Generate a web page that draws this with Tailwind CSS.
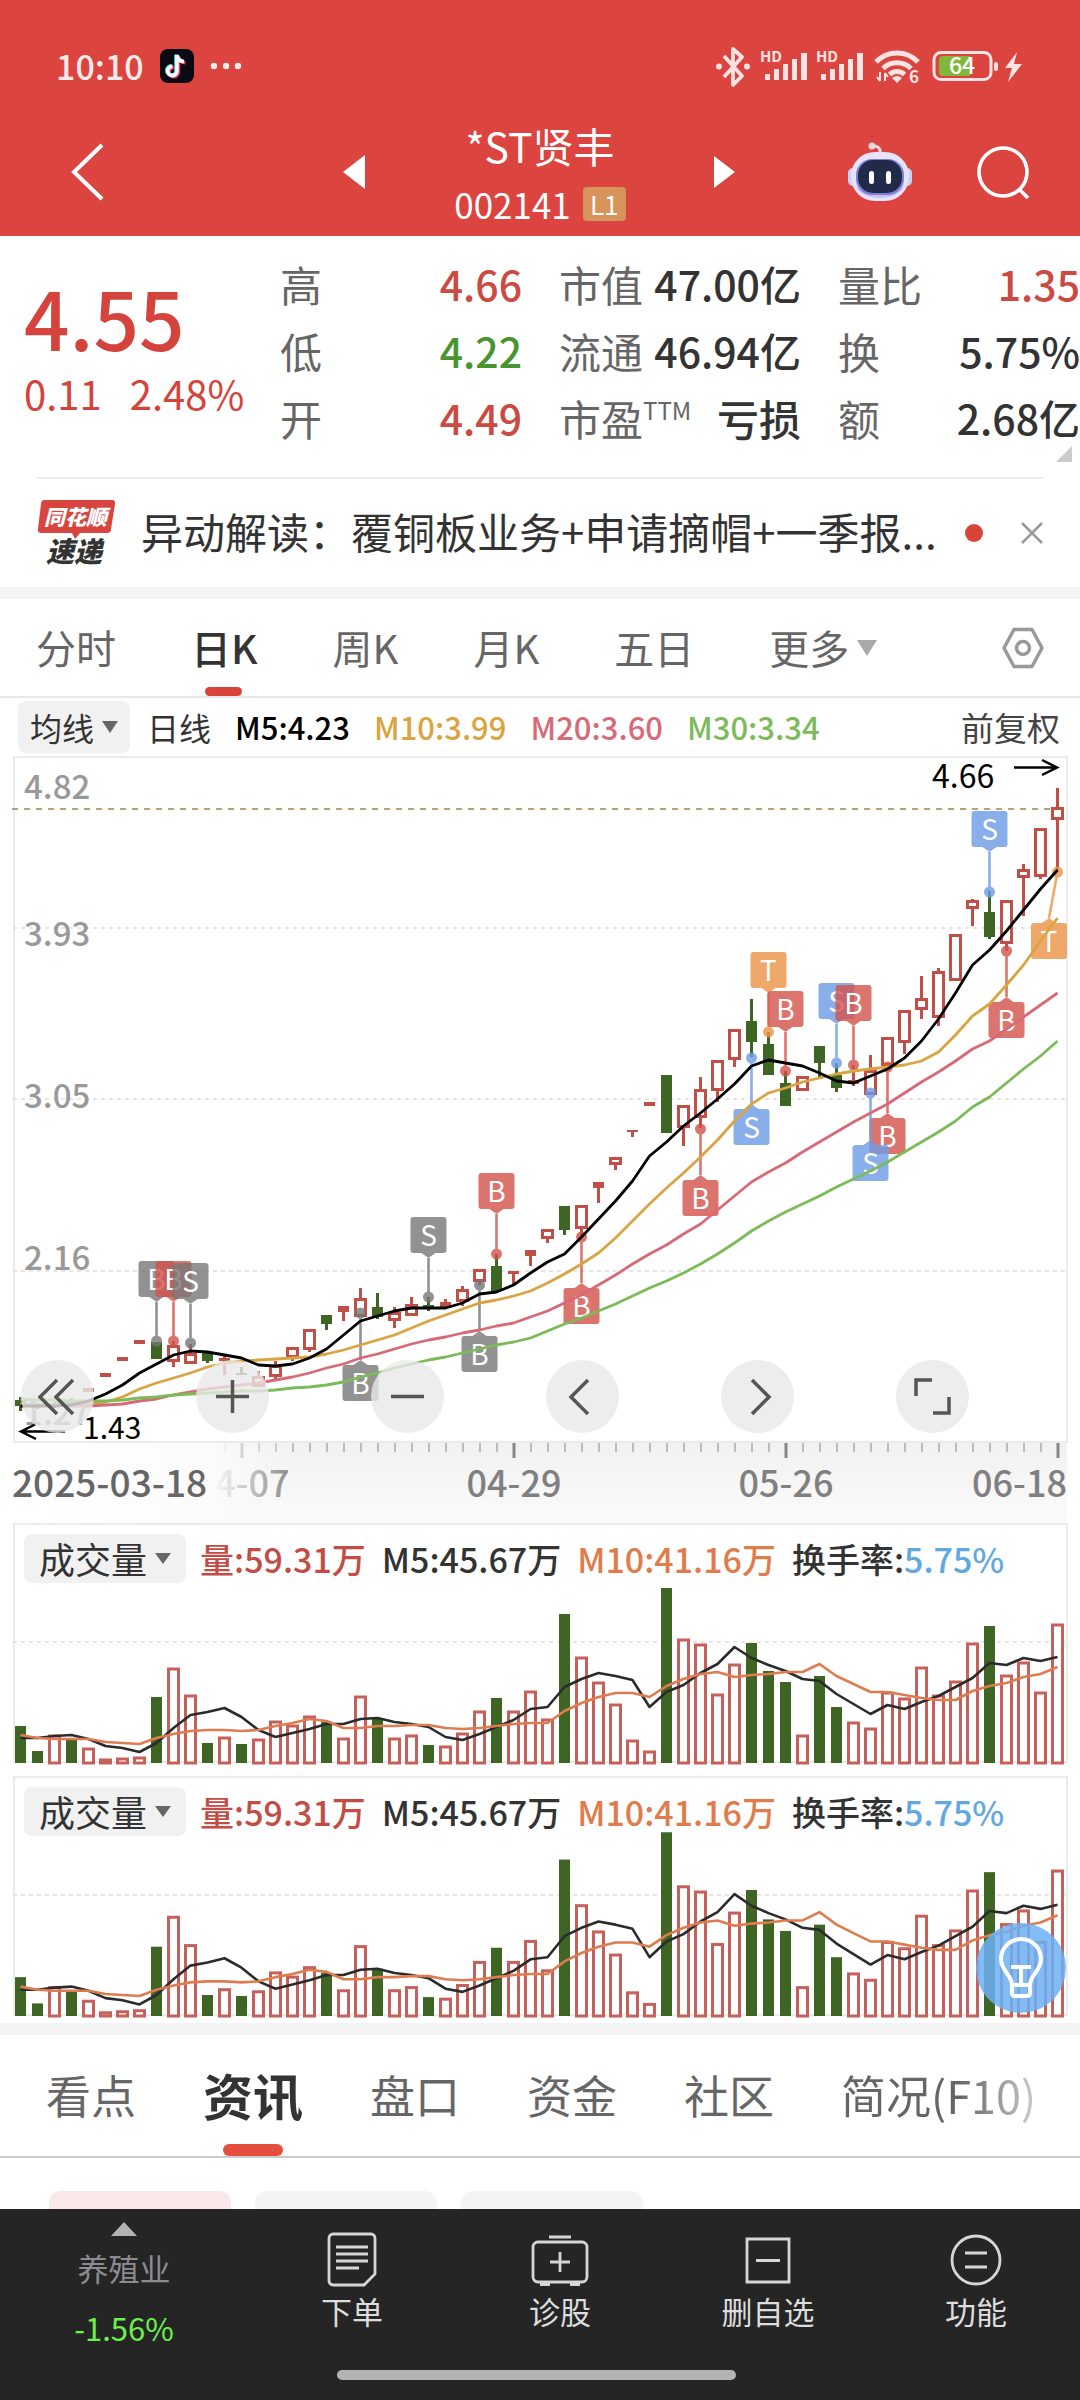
<!DOCTYPE html>
<html lang="zh-CN">

<head>
    <meta charset="UTF-8" />
    <meta name="viewport" content="width=device-width, initial-scale=1.0" />
    <title>*ST贤丰 002141</title>
    <script src="https://cdn.jsdelivr.net/npm/@tailwindcss/browser@4"></script>
</head>

<body class="bg-white min-h-screen flex flex-col overflow-x-hidden font-['Noto_Sans_CJK_SC',sans-serif] text-[#333]">

    <!-- Header -->
    <header class="bg-[#dc443f] text-white">
        <div class="h-[88px] pt-[44px] pl-[56px] pr-[58px] flex items-center justify-between">
            <div class="flex items-center gap-4 h-[44px]">
                <span class="text-[34px] leading-[44px] font-medium text-[#fdeae9]">10:10</span>
                <svg class="w-[34px] h-[34px]" viewBox="0 0 34 34">
                    <rect width="34" height="34" rx="8" fill="#0b0a14" />
                    <g fill="none" stroke-width="3.6">
                        <path d="M17 6v16a4.6 4.6 0 1 1-4.6-4.6M17 6c.4 4 3.200 6.400 7 6.600" stroke="#35e0dc" transform="translate(-1 -.6)" />
                        <path d="M17 6v16a4.600 4.600 0 1 1-4.600-4.600M17 6c.4 4 3.200 6.400 7 6.600" stroke="#f03a5f" transform="translate(1.400 1)" />
                        <path d="M17 6v16a4.600 4.600 0 1 1-4.600-4.600M17 6c.4 4 3.200 6.400 7 6.600" stroke="#fff" />
                    </g>
                </svg>
                <svg class="w-[32px] h-[8px]" viewBox="0 0 32 8" fill="#fdeae9">
                    <circle cx="4" cy="4" r="3.2" /><circle cx="16" cy="4" r="3.2" /><circle cx="28" cy="4" r="3.2" />
                </svg>
            </div>
            <svg class="w-[306px] h-[44px]" viewBox="716 44 306 44" fill="#fde3e2">
                <!-- bluetooth -->
                <path d="M724 56l18 20-9 9V49l9 8-18 20" fill="none" stroke="#fde3e2" stroke-width="3.8" stroke-linejoin="round" />
                <circle cx="719" cy="66.500" r="3" /><circle cx="747" cy="66.500" r="3" />
                <!-- signal 1 -->
                <text x="760" y="62" font-size="15" font-weight="700">HD</text>
                <path d="M765 74h5v6h-5zM774 69h5v11h-5zM783 64h5v16h-5zM792 59h5v21h-5zM801 53h6v27h-6z" />
                <!-- signal 2 -->
                <text x="816" y="62" font-size="15" font-weight="700">HD</text>
                <path d="M821 74h5v6h-5zM830 69h5v11h-5zM839 64h5v16h-5zM848 59h5v21h-5zM857 53h6v27h-6z" />
                <!-- wifi -->
                <g fill="none" stroke="#fde3e2" stroke-width="5">
                    <path d="M876 62a29 29 0 0 1 42 0M883 68.500a20 20 0 0 1 28 0M889.500 74.500a11 11 0 0 1 15 0" />
                    <path d="M880 72v9m0 0l-3-4m8 4v-8m0 0l3 4" stroke-width="2" />
                </g>
                <path d="M892 78a8 8 0 0 1 10 0l-5 5z" />
                <text x="909" y="83" font-size="17" font-weight="700">6</text>
                <!-- battery -->
                <rect x="934" y="52.500" width="57" height="27" rx="7" fill="none" stroke="#fde3e2" stroke-width="3" />
                <path d="M943 56h27v20h-27a4 4 0 0 1-4-4V60a4 4 0 0 1 4-4z" fill="#7fb83a" />
                <rect x="994" y="62" width="4" height="9" rx="2" />
                <text x="949" y="74" font-size="23" font-weight="500" fill="#fff">64</text>
                <path d="M1017 52l-12 16h7l-4 14 14-18h-8z" />
            </svg>
        </div>

        <nav class="h-[148px] pb-[15px] grid grid-cols-[1fr_300px_1fr] items-end">
            <div class="h-[98px] pl-[68px] pr-[25px] flex items-center justify-between">
                <button type="button" aria-label="返回">
                    <svg class="w-[38px] h-[58px]" viewBox="0 0 38 58" fill="none" stroke="#fff" stroke-width="4"><path d="M34 2L6 29l28 27" /></svg>
                </button>
                <button type="button" aria-label="上一只">
                    <svg class="w-[22px] h-[34px]" viewBox="0 0 22 34" fill="#fff"><path d="M22 0v34L0 17z" /></svg>
                </button>
            </div>
            <div class="flex flex-col items-center gap-4">
                <h1 class="text-[41px] leading-[52px]">*ST贤丰</h1>
                <div class="flex items-center gap-3 h-[34px]">
                    <span class="text-[35px] leading-[34px]">002141</span>
                    <span class="w-[43px] h-[34px] rounded-sm bg-[#d6935a] text-[26px] leading-[34px] text-center">L1</span>
                </div>
            </div>
            <div class="h-[98px] pl-6 pr-[50px] flex items-center justify-between">
                <button type="button" aria-label="下一只">
                    <svg class="w-[21px] h-[32px]" viewBox="0 0 21 32" fill="#fff"><path d="M0 0v32l21-16z" /></svg>
                </button>
                <div class="flex items-center gap-[64px]">
                    <button type="button" aria-label="智能助手">
                        <svg class="w-[64px] h-[60px]" viewBox="0 0 64 60">
                            <path d="M32 12c1-6-2-8-7-8" fill="none" stroke="#f4dfe6" stroke-width="3" />
                            <circle cx="24" cy="4" r="3.500" fill="#f7d5da" />
                            <rect x="0" y="26" width="10" height="18" rx="5" fill="#c9d3f5" />
                            <rect x="54" y="26" width="10" height="18" rx="5" fill="#c9d3f5" />
                            <rect x="3" y="10" width="58" height="49" rx="24" fill="#e6e3fa" />
                            <path d="M8 44c6 16 42 16 48 0-8 10-40 10-48 0z" fill="#c7bff3" />
                            <rect x="8" y="17" width="48" height="36" rx="16" fill="#7b7fd6" />
                            <rect x="10" y="18" width="44" height="33" rx="15" fill="#222a49" />
                            <rect x="21" y="29" width="5" height="13" rx="2.500" fill="#fff" />
                            <rect x="38" y="29" width="5" height="13" rx="2.500" fill="#fff" />
                        </svg>
                    </button>
                    <button type="button" aria-label="搜索">
                        <svg class="w-[54px] h-[54px]" viewBox="0 0 54 54" fill="none" stroke="#fff" stroke-width="3.600"><circle cx="27" cy="27" r="24" /><path d="M43 44l9 9" /></svg>
                    </button>
                </div>
            </div>
        </nav>
    </header>

    <!-- Quote -->
    <section class="relative h-[241px] pt-[14px] pl-6 grid grid-cols-[219px_1fr_1fr_1fr] gap-x-[37px]">
        <div class="pt-4 text-[#d5443c] whitespace-nowrap">
            <p class="text-[80px] leading-[100px] font-medium">4.55</p>
            <p class="text-[40px] leading-[54px] flex gap-7"><span>0.11</span><span>2.48%</span></p>
        </div>
        <dl class="text-[42px] leading-[67px]">
            <div class="flex justify-between"><dt class="text-[#666]">高</dt><dd class="text-[41px] font-medium text-[#cb4a42]">4.66</dd></div>
            <div class="flex justify-between"><dt class="text-[#666]">低</dt><dd class="text-[41px] font-medium text-[#479530]">4.22</dd></div>
            <div class="flex justify-between"><dt class="text-[#666]">开</dt><dd class="text-[41px] font-medium text-[#cb4a42]">4.49</dd></div>
        </dl>
        <dl class="text-[42px] leading-[67px] whitespace-nowrap">
            <div class="flex justify-between"><dt class="text-[#666]">市值</dt><dd class="text-[41px] font-medium">47.00亿</dd></div>
            <div class="flex justify-between"><dt class="text-[#666]">流通</dt><dd class="text-[41px] font-medium">46.94亿</dd></div>
            <div class="flex justify-between"><dt class="text-[#666] flex">市盈<span class="text-[24px] leading-[52px]">TTM</span></dt><dd class="font-medium">亏损</dd></div>
        </dl>
        <dl class="text-[42px] leading-[67px] whitespace-nowrap">
            <div class="flex justify-between"><dt class="text-[#666]">量比</dt><dd class="text-[41px] font-medium text-[#cb4a42]">1.35</dd></div>
            <div class="flex justify-between"><dt class="text-[#666]">换</dt><dd class="text-[41px] font-medium">5.75%</dd></div>
            <div class="flex justify-between"><dt class="text-[#666]">额</dt><dd class="text-[41px] font-medium">2.68亿</dd></div>
        </dl>
        <svg class="absolute right-2 bottom-[15px] w-4 h-4" viewBox="0 0 16 16" fill="#ccc"><path d="M16 0v16H0z" /></svg>
    </section>

    <!-- Notice -->
    <section class="mx-[37px] h-[110px] border-t-2 border-[#eee] flex items-center">
        <svg class="w-[78px] h-[66px] shrink-0" viewBox="0 0 78 66">
            <path d="M7 0h68a3 3 0 0 1 3 4l-4 25a4 4 0 0 1-4 4H43l-5 6-3-6H4a3 3 0 0 1-3-4L4 4a4 4 0 0 1 3-4z" fill="#d8443e" />
            <text x="7" y="25" font-size="21" font-weight="900" font-style="italic" fill="#fff">同花顺</text>
            <text x="9" y="62" font-size="28" font-weight="900" font-style="italic" fill="#333">速递</text>
        </svg>
        <a href="#" class="ml-[26px] pb-1 text-[42px] leading-[60px] flex-1 whitespace-nowrap">异动解读：覆铜板业务+申请摘帽+一季报...</a>
        <span class="w-[18px] h-[18px] rounded-full bg-[#d8443a] shrink-0"></span>
        <button type="button" aria-label="关闭" class="ml-[38px] shrink-0">
            <svg class="w-[22px] h-[22px]" viewBox="0 0 22 22" stroke="#999" stroke-width="2.500"><path d="M1 1l20 20M21 1L1 21" /></svg>
        </button>
    </section>
    <div class="h-3 bg-[#f4f4f4]"></div>

    <!-- Period tabs -->
    <nav class="h-[99px] pl-[36px] pr-[36px] border-b-2 border-[#e8e8e8] flex items-center justify-between text-[40px] leading-[97px] text-[#666]">
        <div class="flex gap-[75px]">
            <a href="#">分时</a>
            <a href="#" class="relative text-[#333] font-medium">日K<span class="absolute bottom-0 left-[14px] w-[37px] h-[9px] rounded-full bg-[#d8443a]"></span></a>
            <a href="#">周K</a>
            <a href="#">月K</a>
            <a href="#">五日</a>
            <a href="#" class="flex items-center gap-2">更多<svg class="w-5 h-4" viewBox="0 0 20 16" fill="#aaa"><path d="M0 0h20L10 16z" /></svg></a>
        </div>
        <button type="button" aria-label="设置">
            <svg class="w-[42px] h-[42px]" viewBox="0 0 42 42" fill="none" stroke="#999" stroke-width="3.500" stroke-linejoin="round"><path d="M12 2.500h18L40 21l-10 18.500H12L2 21z" /><circle cx="21" cy="21" r="6.500" /></svg>
        </button>
    </nav>

    <!-- Moving averages -->
    <div class="h-[58px] pl-[18px] pr-[20px] flex items-center text-[31px] leading-[52px] font-medium whitespace-nowrap">
        <button type="button" class="w-[112px] h-[52px] rounded-lg bg-[#f1f1f1] flex items-center justify-center gap-2 text-[32px] font-normal">均线<svg class="w-4 h-3" viewBox="0 0 16 12" fill="#666"><path d="M0 0h16L8 12z" /></svg></button>
        <span class="ml-[17px] text-[32px] font-normal">日线</span>
        <span class="ml-6 text-black">M5:4.23</span>
        <span class="ml-6 text-[#d9a441]">M10:3.99</span>
        <span class="ml-6 text-[#d86a78]">M20:3.60</span>
        <span class="ml-6 text-[#7cba5a]">M30:3.34</span>
        <button type="button" class="ml-auto text-[33px] font-normal text-[#444]">前复权</button>
    </div>

    <!-- K line chart -->
    <section class="relative">
        <svg id="kline" class="block w-full h-auto" viewBox="0 756 1080 767">
            <defs>
                <linearGradient id="axis" x1="0" x2="0" y1="0" y2="1"><stop offset="0" stop-color="#f1f1f1" /><stop offset="1" stop-color="#fbfbfb" /></linearGradient>
                <linearGradient id="fade" x1="0" x2="1" y1="0" y2="0"><stop offset="0" stop-color="#fff" /><stop offset=".7" stop-color="#fbfbfb" /><stop offset="1" stop-color="#f8f8f8" stop-opacity="0" /></linearGradient>
            </defs>
            <rect x="13" y="1443" width="1054" height="80" fill="url(#axis)" />
            <g id="ticks"></g>
            <g font-size="36" font-weight="500" fill="#808080" text-anchor="middle">
                <text x="242" y="1497">04-07</text>
                <text x="514" y="1497">04-29</text>
                <text x="786" y="1497">05-26</text>
                <text x="1067" y="1497" text-anchor="end">06-18</text>
            </g>
            <rect x="13" y="1443" width="285" height="80" fill="url(#fade)" />
            <text x="12" y="1497" font-size="37" font-weight="500" fill="#666">2025-03-18</text>
            <rect x="14" y="757" width="1053" height="685" fill="none" stroke="#ebebeb" stroke-width="2" />
            <path d="M13 928H1067M13 1099H1067M13 1271H1067" stroke="#dedede" stroke-width="1.500" stroke-dasharray="4 4" />
            <path d="M12 809H1067" stroke="#bba172" stroke-width="2" stroke-dasharray="6 6" />
            <g font-size="33" font-weight="500" fill="#999">
                <text x="24" y="799">4.82</text>
                <text x="24" y="946">3.93</text>
                <text x="24" y="1108">3.05</text>
                <text x="24" y="1270">2.16</text>
                <text x="24" y="1425">1.27</text>
            </g>
            <g id="candles"></g>
            <g id="marks"></g>
            <g id="averages" fill="none" stroke-width="2.800" stroke-linejoin="round"></g>
            <g font-size="32" fill="#000">
                <text x="932" y="788">4.66</text>
                <text x="83" y="1439" font-size="30">1.43</text>
            </g>
            <path d="M1014 767.500h43M1042 760l15 7.500-15 7.500M65 1431.500H21M36 1424l-15 7.500 15 7.500" fill="none" stroke="#000" stroke-width="2.500" />
        </svg>
        <div class="absolute left-[21px] top-[604px] flex gap-[102px]">
            <button type="button" aria-label="最早" class="w-[73px] h-[73px] rounded-full bg-[#e8e8e8]/80">
                <svg class="w-[73px] h-[73px]" viewBox="0 0 73 73" fill="none" stroke="#555" stroke-width="3.500"><path d="M36 20L19 37l17 17M52 20L35 37l17 17" /></svg>
            </button>
            <button type="button" aria-label="放大" class="w-[73px] h-[73px] rounded-full bg-[#e8e8e8]/80">
                <svg class="w-[73px] h-[73px]" viewBox="0 0 73 73" fill="none" stroke="#555" stroke-width="3.500"><path d="M20 36.500h33M36.500 20v33" /></svg>
            </button>
            <button type="button" aria-label="缩小" class="w-[73px] h-[73px] rounded-full bg-[#e8e8e8]/80">
                <svg class="w-[73px] h-[73px]" viewBox="0 0 73 73" fill="none" stroke="#555" stroke-width="3.500"><path d="M20 36.500h33" /></svg>
            </button>
            <button type="button" aria-label="左移" class="w-[73px] h-[73px] rounded-full bg-[#e8e8e8]/80">
                <svg class="w-[73px] h-[73px]" viewBox="0 0 73 73" fill="none" stroke="#555" stroke-width="3.500"><path d="M42 20L25 37l17 17" /></svg>
            </button>
            <button type="button" aria-label="右移" class="w-[73px] h-[73px] rounded-full bg-[#e8e8e8]/80">
                <svg class="w-[73px] h-[73px]" viewBox="0 0 73 73" fill="none" stroke="#555" stroke-width="3.500"><path d="M31 20l17 17-17 17" /></svg>
            </button>
            <button type="button" aria-label="全屏" class="w-[73px] h-[73px] rounded-full bg-[#e8e8e8]/80">
                <svg class="w-[73px] h-[73px]" viewBox="0 0 73 73" fill="none" stroke="#555" stroke-width="3.500"><path d="M20 36V20h16M53 37v16H37" /></svg>
            </button>
        </div>
    </section>

    <!-- Volume panels -->
    <section class="grid">
        <svg id="volume-1" class="col-start-1 row-start-1 block w-full h-auto" viewBox="0 0 1080 253"></svg>
        <div class="col-start-1 row-start-1 h-[70px] pl-6 flex items-center text-[34px] font-medium whitespace-nowrap">
            <button type="button" class="w-[162px] h-[49px] rounded-lg bg-[#f1f1f1] flex items-center justify-center gap-2 text-[36px] leading-[49px] font-normal">成交量<svg class="w-4 h-[11px]" viewBox="0 0 16 11" fill="#666"><path d="M0 0h16L8 11z" /></svg></button>
            <span class="ml-[14px] text-[#c34d45]">量:59.31万</span>
            <span class="ml-4">M5:45.67万</span>
            <span class="ml-4 text-[#e07b4c]">M10:41.16万</span>
            <span class="ml-4">换手率:<span class="text-[#62a8e0]">5.75%</span></span>
        </div>
    </section>
    <section class="grid relative">
        <svg id="volume-2" class="col-start-1 row-start-1 block w-full h-auto" viewBox="0 0 1080 247"></svg>
        <div class="col-start-1 row-start-1 h-[70px] pl-6 flex items-center text-[34px] font-medium whitespace-nowrap">
            <button type="button" class="w-[162px] h-[49px] rounded-lg bg-[#f1f1f1] flex items-center justify-center gap-2 text-[36px] leading-[49px] font-normal">成交量<svg class="w-4 h-[11px]" viewBox="0 0 16 11" fill="#666"><path d="M0 0h16L8 11z" /></svg></button>
            <span class="ml-[14px] text-[#c34d45]">量:59.31万</span>
            <span class="ml-4">M5:45.67万</span>
            <span class="ml-4 text-[#e07b4c]">M10:41.16万</span>
            <span class="ml-4">换手率:<span class="text-[#62a8e0]">5.75%</span></span>
        </div>
        <button type="button" aria-label="提示" class="absolute right-[14px] bottom-[10px] w-[90px] h-[90px] rounded-full bg-[#6cb0f5]/85">
            <svg class="w-[90px] h-[90px]" viewBox="0 0 90 90" fill="none" stroke="#fff" stroke-width="4"><path d="M36 62c0-10-11-14-11-26a20 20 0 0 1 40 0c0 12-11 16-11 26zM36 62v8q0 3 3 3h12q3 0 3-3v-8M35 44h20M45 44v18" /></svg>
        </button>
    </section>
    <div class="h-3 bg-[#f4f4f4]"></div>

    <!-- Content tabs -->
    <nav class="h-[123px] pl-[46px] border-b-2 border-[#ccc] flex gap-[67px] text-[45px] leading-[119px] text-[#666] whitespace-nowrap">
        <a href="#">看点</a>
        <a href="#" class="relative text-[50px] font-bold text-[#333]">资讯<span class="absolute bottom-0 left-5 w-[60px] h-3 rounded-full bg-[#e54d3f]"></span></a>
        <a href="#">盘口</a>
        <a href="#">资金</a>
        <a href="#">社区</a>
        <a href="#" class="bg-linear-to-r from-[#666] from-60% to-[#ccc] bg-clip-text text-transparent">简况(F10)</a>
    </nav>
    <div class="h-[51px] pt-[33px] pl-[49px] flex gap-6 overflow-hidden">
        <span class="w-[182px] h-[60px] rounded-xl bg-[#f9e8e9]"></span>
        <span class="w-[182px] h-[60px] rounded-xl bg-[#f4f4f4]"></span>
        <span class="w-[182px] h-[60px] rounded-xl bg-[#f4f4f4]"></span>
    </div>

    <!-- Bottom bar -->
    <footer class="flex-1 bg-[#252525] text-[#ddd] text-[31px] leading-[40px] flex flex-col">
        <div class="grid grid-cols-[248px_1fr_1fr_1fr_1fr]">
            <a href="#" class="pt-[13px] flex flex-col items-center text-[#8c8c90]">
                <svg class="w-[26px] h-[14px]" viewBox="0 0 26 14" fill="#b3b3b3"><path d="M13 0l13 14H0z" /></svg>
                <span class="mt-3">养殖业</span>
                <span class="mt-5 text-[#6cf04c]">-1.56%</span>
            </a>
            <a href="#" class="pt-[22px] flex flex-col items-center gap-1">
                <svg class="w-[56px] h-[56px]" viewBox="0 0 56 56" fill="none" stroke="#d6d6d6" stroke-width="2.800"><path d="M9 3h38a4 4 0 0 1 4 4v36L40 54H9a4 4 0 0 1-4-4V7a4 4 0 0 1 4-4zM12 16h32M12 23h32M12 30h32M12 37h23" /></svg>
                下单
            </a>
            <a href="#" class="pt-[22px] flex flex-col items-center gap-1">
                <svg class="w-[58px] h-[56px]" viewBox="0 0 58 56" fill="none" stroke="#d6d6d6" stroke-width="2.800"><path d="M18 6h22" stroke-width="3" /><rect x="2" y="11" width="54" height="40" rx="5" /><path d="M29 21v20M19 31h20" /><path d="M9 53h10M39 53h10" stroke-width="4" /></svg>
                诊股
            </a>
            <a href="#" class="pt-[22px] flex flex-col items-center gap-1">
                <svg class="w-[46px] h-[56px]" viewBox="0 0 46 56" fill="none" stroke="#d6d6d6" stroke-width="2.800"><path d="M2 8h42v43H2zM11 29.500h24" /></svg>
                删自选
            </a>
            <a href="#" class="pt-[22px] flex flex-col items-center gap-1">
                <svg class="w-[52px] h-[56px]" viewBox="0 0 52 56" fill="none" stroke="#d6d6d6" stroke-width="2.800"><circle cx="26" cy="29" r="24" /><path d="M15 22h22M15 36h22" /></svg>
                功能
            </a>
        </div>
        <div class="mt-auto pb-5 pr-2 flex justify-center"><span class="w-[399px] h-[10px] rounded-full bg-[#b3b3b3]"></span></div>
    </footer>

    <script>
        const STEP = 17;
        const FIRST = 20.5;
        const RED = '#bf4f47';
        const GREEN = '#3f6524';
        const cx = (i) => FIRST + STEP * i;

        // [type, body top, body bottom, wick top, wick bottom]; r = hollow, f = filled red, g = green
        const candles = [
            ['g', 1400, 1406, 1397, 1411], ['g', 1404, 1407, 1403, 1409], ['g', 1404, 1406, 1402, 1408], ['g', 1400, 1403, 1398, 1405],
            ['f', 1388, 1392, 1388, 1392], ['f', 1373, 1377, 1373, 1377], ['f', 1357, 1361, 1357, 1361], ['f', 1340, 1344, 1340, 1344],
            ['g', 1342, 1359, 1342, 1359], ['r', 1345, 1362, 1341, 1367], ['r', 1353, 1364, 1344, 1364], ['g', 1353, 1361, 1353, 1363],
            ['f', 1358, 1361, 1355, 1375], ['g', 1373, 1375, 1367, 1375], ['r', 1376, 1387, 1371, 1387], ['r', 1365, 1377, 1361, 1379],
            ['r', 1347, 1358, 1347, 1361], ['r', 1329, 1350, 1329, 1352], ['g', 1315, 1324, 1315, 1330], ['f', 1306, 1312, 1306, 1321],
            ['r', 1298, 1317, 1288, 1317], ['g', 1307, 1317, 1293, 1319], ['r', 1312, 1321, 1307, 1328], ['r', 1304, 1316, 1297, 1316],
            ['g', 1305, 1308, 1297, 1311], ['f', 1302, 1307, 1299, 1307], ['r', 1289, 1302, 1286, 1306], ['r', 1269, 1282, 1269, 1285],
            ['g', 1266, 1291, 1254, 1291], ['f', 1271, 1274, 1271, 1285], ['f', 1250, 1256, 1250, 1266], ['r', 1229, 1239, 1229, 1243],
            ['g', 1206, 1230, 1206, 1235], ['r', 1205, 1229, 1205, 1236], ['f', 1182, 1188, 1182, 1203], ['r', 1157, 1165, 1157, 1170],
            ['f', 1130, 1132, 1130, 1137], ['f', 1102, 1106, 1102, 1106], ['g', 1075, 1133, 1075, 1133], ['r', 1105, 1128, 1105, 1146],
            ['r', 1089, 1118, 1077, 1128], ['r', 1060, 1091, 1060, 1102], ['r', 1029, 1060, 1029, 1067], ['g', 1021, 1042, 999, 1057],
            ['g', 1044, 1075, 1032, 1075], ['g', 1083, 1106, 1071, 1106], ['r', 1076, 1091, 1076, 1091], ['g', 1046, 1063, 1046, 1077],
            ['g', 1075, 1088, 1063, 1092], ['f', 1080, 1084, 1065, 1086], ['r', 1070, 1095, 1055, 1095], ['r', 1037, 1066, 1037, 1066],
            ['r', 1010, 1043, 1010, 1054], ['r', 998, 1010, 976, 1019], ['r', 971, 1018, 968, 1026], ['r', 934, 981, 934, 981],
            ['r', 900, 909, 899, 926], ['g', 912, 937, 891, 939], ['r', 900, 944, 900, 951], ['r', 869, 878, 864, 916],
            ['r', 828, 877, 828, 879], ['r', 807, 820, 788, 870]
        ];

        const averages = [
            ['#d9a441', [1404, 1405, 1405, 1405, 1404, 1402, 1397, 1389, 1383, 1378, 1373, 1367, 1363, 1361, 1360, 1359, 1358, 1357, 1354, 1350, 1345, 1340, 1335, 1328, 1321, 1315, 1309, 1303, 1300, 1296, 1291, 1283, 1274, 1264, 1253, 1238, 1221, 1204, 1188, 1173, 1157, 1140, 1121, 1104, 1093, 1088, 1082, 1078, 1074, 1071, 1069, 1067, 1065, 1061, 1052, 1035, 1016, 1004, 985, 965, 941, 918]],
            ['#d86a78', [1404, 1405, 1405, 1406, 1406, 1405, 1404, 1401, 1399, 1395, 1392, 1389, 1387, 1385, 1383, 1380, 1377, 1373, 1368, 1364, 1358, 1354, 1349, 1344, 1340, 1337, 1333, 1330, 1326, 1323, 1317, 1311, 1303, 1295, 1285, 1275, 1264, 1254, 1245, 1234, 1224, 1210, 1196, 1182, 1172, 1163, 1152, 1142, 1132, 1122, 1113, 1104, 1093, 1082, 1072, 1061, 1049, 1041, 1029, 1017, 1005, 993]],
            ['#7cba5a', [1399, 1400, 1400, 1401, 1401, 1401, 1400, 1398, 1397, 1395, 1394, 1393, 1392, 1391, 1391, 1390, 1388, 1387, 1385, 1382, 1377, 1373, 1368, 1364, 1360, 1357, 1353, 1349, 1345, 1342, 1338, 1331, 1324, 1318, 1311, 1304, 1296, 1288, 1281, 1273, 1264, 1254, 1243, 1231, 1221, 1212, 1204, 1196, 1187, 1179, 1171, 1162, 1152, 1142, 1132, 1121, 1107, 1097, 1083, 1069, 1056, 1041]],
            ['#000', [1406, 1406, 1406, 1405, 1401, 1394, 1385, 1373, 1364, 1355, 1351, 1352, 1355, 1358, 1365, 1366, 1364, 1358, 1349, 1335, 1321, 1316, 1311, 1308, 1308, 1308, 1303, 1294, 1292, 1285, 1273, 1262, 1254, 1237, 1219, 1201, 1181, 1156, 1142, 1126, 1113, 1099, 1084, 1066, 1060, 1063, 1066, 1073, 1081, 1083, 1076, 1069, 1058, 1041, 1019, 993, 965, 950, 931, 910, 889, 870]]
        ];

        // [letter, colour, index, dot y, box top]
        const GRAY = '#777', MRED = '#d4524b', BLUE = '#6c9ce5', ORANGE = '#ec9344';
        const marks = [
            ['B', GRAY, 8, 1341, 1261], ['B', MRED, 9, 1341, 1261], ['S', GRAY, 10, 1343, 1263],
            ['B', GRAY, 20, 1313, 1365], ['S', GRAY, 24, 1297, 1217], ['B', GRAY, 27, 1285, 1336],
            ['B', MRED, 28, 1254, 1173], ['B', MRED, 33, 1237, 1288], ['B', MRED, 40, 1129, 1180],
            ['S', BLUE, 43, 1058, 1109], ['T', ORANGE, 44, 1032, 952], ['B', MRED, 45, 1071, 991],
            ['S', BLUE, 48, 1063, 983], ['B', MRED, 49, 1065, 985], ['B', MRED, 51, 1067, 1118],
            ['S', BLUE, 50, 1093, 1145], ['S', BLUE, 57, 892, 811], ['B', MRED, 58, 951, 1002],
            ['T', ORANGE, 61, 872, 923]
        ];

        // bar heights, g = closed lower
        const volumes = 'g37 g12 r28 g23 r15 r4 r5 r6 g66 r95 r68 g20 r26 g19 r24 r42 r38 r47 g41 r25 r67 g45 r25 r28 g18 r17 r30 r52 g65 r52 r72 r44 g149 r106 r81 r59 r23 r12 g175 r124 r119 r69 r99 g120 g92 g81 r28 g87 g56 r41 r35 r71 r65 r96 r68 r82 r120 g137 r88 r101 r71 r139'.split(' ');
        const volumeAverages = [
            ['#2b2b2b', [25, 25, 27, 28, 24, 17, 15, 11, 20, 35, 48, 51, 55, 46, 33, 26, 30, 34, 39, 39, 44, 45, 41, 39, 36, 26, 23, 29, 36, 43, 54, 56, 76, 84, 90, 87, 83, 56, 71, 78, 90, 99, 116, 105, 98, 92, 84, 82, 69, 59, 49, 58, 54, 61, 67, 76, 85, 100, 98, 105, 102, 106]],
            ['#de7c50', [28, 25, 24, 24, 24, 21, 20, 19, 25, 29, 32, 33, 33, 32, 33, 37, 40, 44, 42, 35, 35, 37, 37, 38, 38, 35, 34, 35, 37, 39, 40, 40, 52, 60, 66, 70, 70, 66, 77, 84, 89, 91, 86, 88, 89, 91, 91, 99, 87, 79, 71, 71, 68, 65, 63, 63, 72, 77, 80, 86, 89, 96]]
        ];

        const line = (values, y) => values.map((v, i) => `${cx(i)},${y(v)}`).join(' ');

        document.getElementById('candles').innerHTML = candles.map(([type, top, bottom, high, low], i) => {
            const x = cx(i);
            const color = type === 'g' ? GREEN : RED;
            const wicks = `<path d="M${x} ${high}V${top}M${x} ${bottom}V${low}" stroke="${color}" stroke-width="3"/>`;
            if (type === 'r') {
                return wicks + `<rect x="${x - 5}" y="${top + 1.5}" width="10" height="${bottom - top - 3}" fill="#fff" stroke="${color}" stroke-width="3"/>`;
            }
            return wicks + `<rect x="${x - 5.5}" y="${top}" width="11" height="${bottom - top}" fill="${color}"/>`;
        }).join('');

        document.getElementById('averages').innerHTML = averages.map(([color, values]) =>
            `<polyline stroke="${color}" points="${line(values, (v) => v)}"/>`).join('');

        document.getElementById('marks').innerHTML = marks.map(([letter, color, i, dot, top]) => {
            const x = cx(i);
            const bx = Math.min(x, 1049);
            const above = top < dot;
            const edge = above ? top + 36 : top;
            const tip = above ? edge + 5 : edge - 5;
            return `<g opacity=".8"><path d="M${x} ${dot}L${bx} ${tip}" stroke="${color}" stroke-width="2.600"/>
                <circle cx="${x}" cy="${dot}" r="5.500" fill="${color}"/>
                <path d="M${bx - 7} ${edge}L${bx} ${tip}L${bx + 7} ${edge}z" fill="${color}"/>
                <rect x="${bx - 18}" y="${top}" width="36" height="36" rx="3" fill="${color}"/></g>
                <text x="${bx}" y="${top + 29}" font-size="28" fill="#fff" text-anchor="middle">${letter}</text>`;
        }).join('');

        let ticks = '';
        for (let i = 12; i < 62; i++) {
            const major = (i - 13) % 16 === 0;
            ticks += `<path d="M${cx(i) + 0.5} 1443v${major ? 15 : 9}" stroke="${major ? '#888' : '#bbb'}" stroke-width="${major ? 3 : 2}"/>`;
        }
        document.getElementById('ticks').innerHTML = ticks;

        function drawVolume(id, base, scale) {
            const bars = volumes.map((item, i) => {
                const x = cx(i);
                const h = Number(item.slice(1)) * scale;
                if (item[0] === 'g') {
                    return `<rect x="${x - 5.5}" y="${base - h}" width="11" height="${h}" fill="${GREEN}"/>`;
                }
                return `<rect x="${x - 5}" y="${base - h + 1}" width="10" height="${Math.max(h - 1, 1)}" fill="#fff" stroke="#c5605a" stroke-width="3"/>`;
            }).join('');
            const lines = volumeAverages.map(([color, values]) =>
                `<polyline fill="none" stroke="${color}" stroke-width="2.600" stroke-linejoin="round" points="${line(values, (v) => base - v * scale)}"/>`).join('');
            document.getElementById(id).innerHTML =
                `<rect x="14" y="1" width="1053" height="${base - 2}" fill="#fff" stroke="#ebebeb" stroke-width="2"/>
                <path d="M13 ${base - 121}H1067" stroke="#dedede" stroke-width="1.500" stroke-dasharray="4 4"/>` + bars + lines;
        }

        drawVolume('volume-1', 240, 1);
        drawVolume('volume-2', 240, 1.05);
    </script>
</body>

</html>
